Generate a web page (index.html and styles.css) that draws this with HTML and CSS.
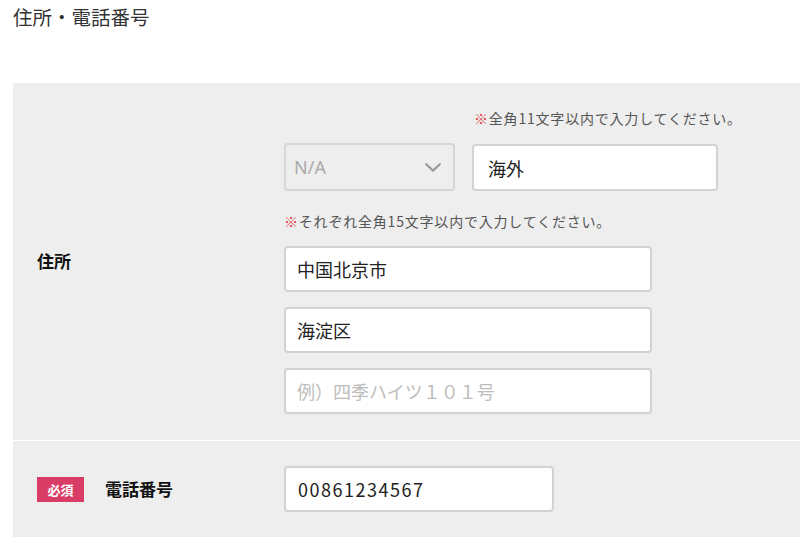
FILE: index.html
```html
<!DOCTYPE html>
<html lang="ja">
<head>
<meta charset="utf-8">
<title>住所・電話番号</title>
<link rel="stylesheet" href="styles.css">
</head>
<body>
<div class="page">
  <h1 class="title">住所・電話番号</h1>
  <div class="panel">
    <div class="row row-address">
      <div class="row-label"><span class="label">住所</span></div>
      <div class="row-fields">
        <div class="top-line">
          <div class="select">
            <span class="select-text">N/A</span>
            <svg class="chevron" width="16" height="9" viewBox="0 0 16 9"><polyline points="1.2,1.2 8,7.6 14.8,1.2" fill="none" stroke="#9a9a9a" stroke-width="2.2" stroke-linecap="round" stroke-linejoin="round"/></svg>
          </div>
          <div class="country-col">
            <p class="note"><span class="mark">※</span>全角11文字以内で入力してください。</p>
            <input class="input input-country" type="text" value="海外">
          </div>
        </div>
        <p class="note note-wide"><span class="mark">※</span>それぞれ全角15文字以内で入力してください。</p>
        <div class="address-lines">
          <input class="input input-addr" type="text" value="中国北京市">
          <input class="input input-addr" type="text" value="海淀区">
          <input class="input input-addr" type="text" placeholder="例）四季ハイツ１０１号">
        </div>
      </div>
    </div>
    <div class="row row-phone">
      <div class="row-label"><span class="badge">必須</span><span class="label">電話番号</span></div>
      <div class="row-fields">
        <input class="input input-phone" type="text" value="00861234567">
      </div>
    </div>
  </div>
</div>
</body>
</html>
```
FILE: styles.css
```css
html, body {
  margin: 0;
  padding: 0;
  background: #ffffff;
}
body {
  font-family: "Noto Sans CJK JP", "Noto Sans", sans-serif;
  color: #222;
}
.page {
  padding-left: 13px;
}
.title {
  margin: 0;
  padding-top: 3px;
  font-size: 19.5px;
  font-weight: normal;
  line-height: 28px;
  color: #333;
  height: 83px;
  box-sizing: border-box;
}
.panel {
  background: #eeeeee;
}
.row {
  display: flex;
  align-items: center;
}
.row + .row {
  border-top: 1px solid #ffffff;
}
.row-label {
  width: 271px;
  flex-shrink: 0;
  box-sizing: border-box;
  padding-left: 24px;
  display: flex;
  align-items: center;
}
.label {
  font-size: 17px;
  font-weight: bold;
  color: #111;
  line-height: 24px;
}
.badge {
  display: inline-flex;
  align-items: center;
  justify-content: center;
  width: 47px;
  height: 25px;
  background: #d93d66;
  color: #fff;
  font-size: 13px;
  font-weight: bold;
  margin-right: 21px;
}
.row-address {
  padding: 25px 0 26px;
}
.row-phone {
  height: 96px;
}
.row-fields {
  display: flex;
  flex-direction: column;
}
.top-line {
  display: flex;
  align-items: flex-end;
  gap: 17px;
}
.select {
  width: 171px;
  height: 48px;
  box-sizing: border-box;
  border: 2px solid #d6d6d6;
  border-radius: 4px;
  background: #eeeeee;
  display: flex;
  align-items: center;
  justify-content: space-between;
  padding: 0 12px 0 8px;
}
.select-text {
  font-size: 18px;
  color: #aaaaaa;
  font-family: "Noto Sans", "Noto Sans CJK JP", sans-serif;
}
.country-col {
  display: flex;
  flex-direction: column;
}
.note {
  margin: 0 0 16px;
  font-size: 14px;
  line-height: 20px;
  color: #555;
  letter-spacing: 0.8px;
  white-space: nowrap;
  padding-left: 2px;
}
.note .mark {
  color: #e0383a;
}
.note-wide {
  margin: 20px 0 15px;
  letter-spacing: 0.8px;
  padding-left: 0;
}
.input {
  box-sizing: border-box;
  border: 2px solid #d2d2d2;
  border-radius: 4px;
  background: #ffffff;
  font-family: "Noto Sans CJK JP", "Noto Sans", sans-serif;
  font-size: 18px;
  color: #222;
  outline: none;
  margin: 0;
}
.input::placeholder {
  color: #bdbdbd;
}
.input-country {
  width: 246px;
  height: 47px;
  padding: 0 14px;
}
.address-lines {
  display: flex;
  flex-direction: column;
  gap: 15px;
}
.input-addr {
  width: 368px;
  height: 46px;
  padding: 0 11px;
}
.input-phone {
  width: 270px;
  height: 46px;
  padding: 0 12px;
  letter-spacing: 1.5px;
}
```
